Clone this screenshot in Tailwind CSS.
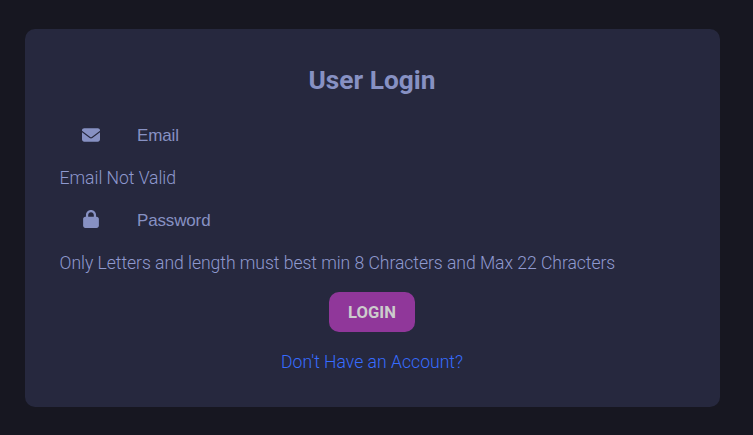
<!DOCTYPE html>
<html lang="en"><head><meta charset="utf-8"><title>User Login</title>
<script src="https://cdn.jsdelivr.net/npm/@tailwindcss/browser@4"></script></head>
<body class="bg-[#171721] h-[435px] overflow-hidden pl-[25px] pt-[29px] font-[Roboto,sans-serif]">
<main class="w-[695px] h-[378px] rounded-[10px] bg-[#26283e] pl-[34px] pr-[35px] pt-[35px] flex flex-col text-[#8791c3]">
<h1 class="text-center text-[26.3px] leading-[32px] font-bold">User Login</h1>
<div class="mt-[23px] h-[32px] flex items-center pl-[23px]">
<svg class="w-[18px] h-[18px] -mt-px" viewBox="0 0 512 512" fill="currentColor"><path d="M64 64C28.700 64 0 90 0 122v14L235 312q21 16 42 0L512 136v-14c0-32-28.700-58-64-58H64zM0 176V384c0 35.300 28.700 64 64 64H448c35.300 0 64-28.700 64-64V176L294.400 339.200c-22.800 17.100-54 17.100-76.800 0L0 176z"/></svg>
<span class="ml-[37px] pt-[2px] text-[17px] tracking-[-0.15px] font-[Liberation_Sans,sans-serif]">Email</span></div>
<p class="mt-[15px] pl-[0.6px] text-[17.6px] leading-[24px] tracking-[-0.05px] font-light text-[#8f99cf]">Email Not Valid</p>
<div class="mt-[14px] h-[32px] flex items-center pl-[23px]">
<svg class="w-[18px] h-[18px] -mt-[2px]" viewBox="-32 0 512 512" fill="currentColor"><path d="M144 144v48H304V144c0-44.200-35.800-80-80-80s-80 35.800-80 80zM80 192V144C80 64.500 144.500 0 224 0s144 64.500 144 144v48h16c35.300 0 64 28.700 64 64V448c0 35.300-28.700 64-64 64H64c-35.300 0-64-28.700-64-64V256c0-35.300 28.700-64 64-64H80z"/></svg>
<span class="ml-[37px] pt-[2px] text-[17px] tracking-[-0.15px] font-[Liberation_Sans,sans-serif]">Password</span></div>
<p class="mt-[15px] pl-[0.6px] text-[17.6px] leading-[24px] tracking-[-0.05px] font-light text-[#8f99cf]">Only Letters and length must best min 8 Chracters and Max 22 Chracters</p>
<button class="mt-[17px] self-center w-[86px] h-[40px] rounded-[10px] bg-[#90379a] text-[#ccc] text-[16.6px] font-bold pt-[2px]">LOGIN</button>
<a class="mt-[18px] self-center text-[17.6px] leading-[24px] font-light text-[#376cff]">Don't Have an Account?</a>
</main></body></html>
